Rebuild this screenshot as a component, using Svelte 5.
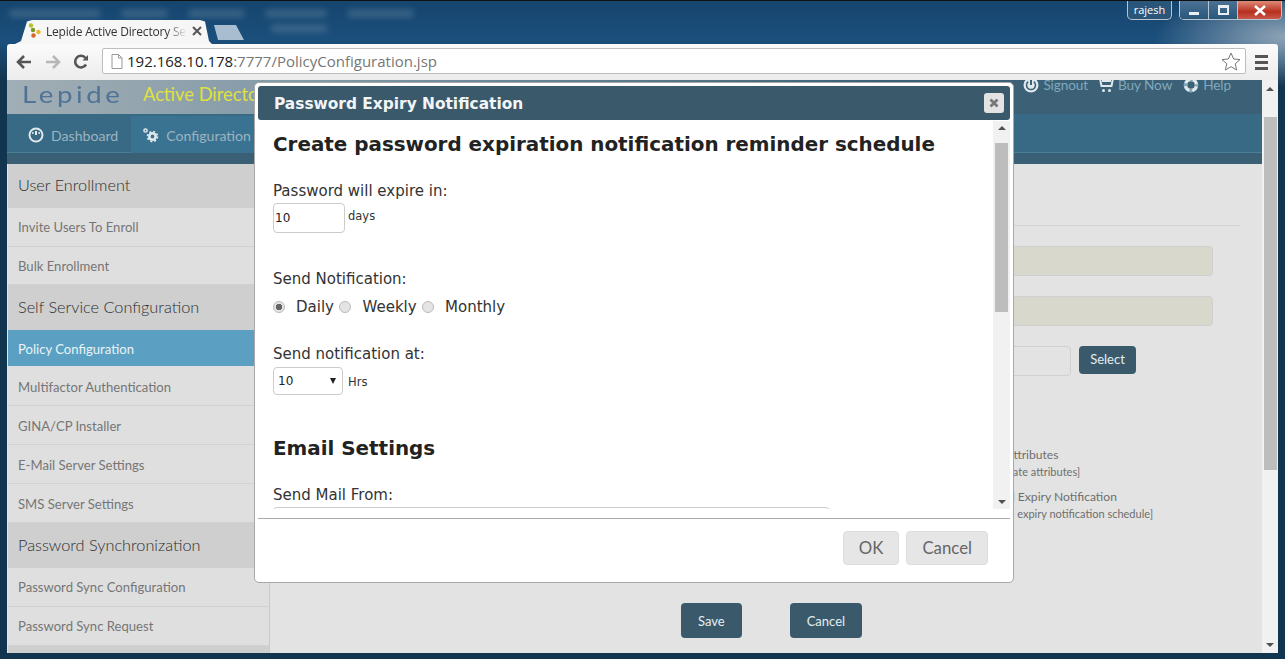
<script>
    const menu = [
        { title: "User Enrollment", items: ["Invite Users To Enroll", "Bulk Enrollment"] },
        { title: "Self Service Configuration", items: ["Policy Configuration", "Multifactor Authentication", "GINA/CP Installer", "E-Mail Server Settings", "SMS Server Settings"] },
        { title: "Password Synchronization", items: ["Password Sync Configuration", "Password Sync Request"] },
        { title: "Reports", items: [] }
    ];
    const blurred = [90, 45, 55, 60, 65];
</script>

<div class="window">
    <div class="titlebar">
        <div class="blur-row">
            {#each blurred as w}
                <span class="blur-bar" style="width: {w}px"></span>
            {/each}
        </div>
        <span class="blur-second"></span>
        <div class="tab">
            <svg class="favicon" width="14" height="16" viewBox="0 0 14 16">
                <circle cx="3" cy="2.5" r="2.2" fill="#b5c22c" />
                <circle cx="5" cy="7" r="2.2" fill="#7c9a2c" />
                <circle cx="10.5" cy="9" r="2.2" fill="#f0b429" />
                <circle cx="5.5" cy="12.5" r="2.2" fill="#d9642c" />
            </svg>
            <span class="tab-title">Lepide Active Directory Self</span>
            <svg class="tab-x" width="10" height="10" viewBox="0 0 10 10"><path d="M1 1l8 8M9 1l-8 8" stroke="#555" stroke-width="2" /></svg>
        </div>
        <div class="newtab"></div>
        <div class="user">rajesh</div>
        <div class="controls">
            <span class="ctl"><i class="min"></i></span>
            <span class="ctl"><i class="max"></i></span>
            <span class="ctl close">
                <svg width="14" height="11" viewBox="0 0 14 11"><path d="M2 1l10 9M12 1L2 10" stroke="#fff" stroke-width="2.6" /></svg>
            </span>
        </div>
    </div>

    <div class="toolbar">
        <svg class="tool" width="18" height="16" viewBox="0 0 18 16"><path d="M16 8H4M9 2L3 8l6 6" fill="none" stroke="#555" stroke-width="2.6" /></svg>
        <svg class="tool" width="18" height="16" viewBox="0 0 18 16"><path d="M2 8h12M9 2l6 6-6 6" fill="none" stroke="#b8b8b8" stroke-width="2.6" /></svg>
        <svg class="tool" width="16" height="16" viewBox="0 0 16 16"><path d="M13 10.5A5.8 5.8 0 1 1 12.5 4" fill="none" stroke="#555" stroke-width="2.6" /><path d="M9.5 6.5H15V1z" fill="#555" /></svg>
        <div class="omnibox">
            <svg width="12" height="15" viewBox="0 0 12 15"><path d="M1 .5h6.5L11 4v10.500H1zM7.500.5V4H11" fill="#fff" stroke="#999" /></svg>
            <span class="url"><b>192.168.10.178</b>:7777/PolicyConfiguration.jsp</span>
            <svg class="star" width="20" height="19" viewBox="0 0 20 19"><path d="M10 1l2.700 6 6.300.6-4.800 4.200 1.500 6.200L10 14.700 4.300 18l1.500-6.200L1 7.600 7.300 7z" fill="#fff" stroke="#777" /></svg>
        </div>
        <div class="hamburger"><i></i><i></i><i></i></div>
    </div>

    <div class="page">
        <div class="content">
            <header class="top">
                <div class="logo"><span>Lepide</span></div>
                <div class="product">Active Directory Self Service</div>
                <div class="toplinks">
                    <svg width="16" height="16" viewBox="0 0 16 16"><circle cx="8" cy="8" r="7.500" fill="#dfe8ec" /><path d="M8 3v5" stroke="#3c6075" stroke-width="2" /><path d="M5.200 4.600a4.500 4.500 0 1 0 5.600 0" fill="none" stroke="#3c6075" stroke-width="1.500" /></svg>
                    <span class="link">Signout</span>
                    <svg width="15" height="16" viewBox="0 0 15 16"><path d="M1 1.500h13l-1.500 7.500h-10zM3 4h9" fill="none" stroke="#dfe8ec" stroke-width="2" /><circle cx="4.500" cy="13.500" r="1.500" fill="#dfe8ec" /><circle cx="10.500" cy="13.500" r="1.500" fill="#dfe8ec" /></svg>
                    <span class="link">Buy Now</span>
                    <svg width="16" height="16" viewBox="0 0 16 16"><circle cx="8" cy="8" r="5.500" fill="none" stroke="#dfe8ec" stroke-width="3.500" /><circle cx="8" cy="8" r="5.500" fill="none" stroke="#7fa9bd" stroke-width="3.500" stroke-dasharray="3 5.600" stroke-dashoffset="1.500" /></svg>
                    <span class="link">Help</span>
                </div>
            </header>
            <nav class="nav">
                <div class="nav-row">
                    <div class="nav-item">
                        <svg width="16" height="16" viewBox="0 0 16 16"><circle cx="8" cy="8" r="6.500" fill="#3c6a82" stroke="#dfe8ec" stroke-width="2" /><path d="M8 4v4" stroke="#dfe8ec" stroke-width="2" /><circle cx="4.800" cy="6" r="1" fill="#dfe8ec" /><circle cx="11.200" cy="6" r="1" fill="#dfe8ec" /></svg>
                        Dashboard
                    </div>
                    <div class="nav-item active">
                        <svg width="17" height="16" viewBox="0 0 17 16"><circle cx="10.500" cy="9.500" r="3.200" fill="none" stroke="#dfe8ec" stroke-width="2.600" /><circle cx="10.500" cy="9.500" r="5" fill="none" stroke="#dfe8ec" stroke-width="1.600" stroke-dasharray="2 1.930" /><circle cx="3.500" cy="3.500" r="1.600" fill="none" stroke="#dfe8ec" stroke-width="1.500" /></svg>
                        Configuration
                    </div>
                </div>
                <div class="nav-foot"></div>
            </nav>
            <div class="body">
                <aside class="sidebar">
                    {#each menu as group}
                        <div class="group">{group.title}</div>
                        {#each group.items as item}
                            <div class="item" class:current={item === "Policy Configuration"}>{item}</div>
                        {/each}
                    {/each}
                </aside>
                <main class="main">
                    <div class="rule"></div>
                    <div class="field filled"></div>
                    <div class="field filled"></div>
                    <div class="pick">
                        <div class="field"></div>
                        <button class="btn small">Select</button>
                    </div>
                    <div class="opts">
                        <div class="opt">Update Attributes</div>
                        <div class="sub shifted">[Select update attributes]</div>
                        <div class="opt second">Password Expiry Notification</div>
                        <div class="sub">[Configure expiry notification schedule]</div>
                    </div>
                    <div class="actions">
                        <button class="btn">Save</button>
                        <button class="btn">Cancel</button>
                    </div>
                </main>
            </div>
        </div>
        <div class="scrollbar page-bar">
            <span class="up"></span>
            <span class="thumb"></span>
            <span class="down"></span>
        </div>

        <div class="modal">
            <div class="modal-head">
                <span>Password Expiry Notification</span>
                <span class="modal-x">
                    <svg width="10" height="10" viewBox="0 0 10 10"><path d="M1.500 1.500l7 7M8.500 1.500l-7 7" stroke="#777" stroke-width="2.800" /></svg>
                </span>
            </div>
            <div class="modal-scroll">
                <div class="modal-body">
                    <h1>Create password expiration notification reminder schedule</h1>
                    <label class="lbl first" for="expire">Password will expire in:</label>
                    <div class="line">
                        <input id="expire" class="num" value="10" />
                        <span class="unit days">days</span>
                    </div>
                    <div class="lbl notif">Send Notification:</div>
                    <div class="radios">
                        <span class="radio on"></span><span class="r-text">Daily</span>
                        <span class="radio"></span><span class="r-text">Weekly</span>
                        <span class="radio"></span><span class="r-text">Monthly</span>
                    </div>
                    <div class="lbl at">Send notification at:</div>
                    <div class="line">
                        <div class="sel">10<span class="caret"></span></div>
                        <span class="unit hrs">Hrs</span>
                    </div>
                    <h2>Email Settings</h2>
                    <div class="lbl">Send Mail From:</div>
                    <div class="mailbox"></div>
                </div>
                <div class="scrollbar modal-bar">
                    <span class="up"></span>
                    <span class="thumb"></span>
                    <span class="down"></span>
                </div>
            </div>
            <div class="modal-foot">
                <button class="mbtn">OK</button>
                <button class="mbtn">Cancel</button>
            </div>
        </div>
    </div>
</div>

<style>
    :global(body) {
        margin: 0;
        overflow: hidden;
    }
    .window {
        width: 1285px;
        height: 659px;
        box-sizing: border-box;
        padding: 0 7px 5px 7px;
        display: flex;
        flex-direction: column;
        background:
            radial-gradient(ellipse 130px 50px at 1285px 36px, #8ea3b5 0%, rgba(142, 163, 181, 0) 100%),
            linear-gradient(#16456e, #1b4f7c 40px, #12354f 80px);
        border-top: 1px solid #111;
        font-family: "Lato", sans-serif;
    }

    /* browser chrome */
    .titlebar {
        height: 43px;
        flex: none;
        display: flex;
        align-items: flex-end;
        position: relative;
    }
    .blur-row {
        position: absolute;
        left: 3px;
        top: 9px;
        display: flex;
        gap: 22px;
        filter: blur(3px);
        opacity: .55;
    }
    .blur-bar, .blur-second {
        height: 7px;
        background: #5d7f9b;
    }
    .blur-second {
        position: absolute;
        left: 264px;
        top: 24px;
        width: 56px;
        filter: blur(3px);
        opacity: .55;
    }
    .tab {
        width: 197px;
        height: 24px;
        margin-left: 8px;
        box-sizing: border-box;
        padding: 0 10px 2px 13px;
        display: flex;
        align-items: center;
        background: #f6f6f6;
        clip-path: polygon(0 100%, 6px 88%, 12px 6%, 17px 0, 185px 0, 190px 6%, 194px 88%, 100% 100%);
        font-family: "Open Sans", sans-serif;
        font-size: 12px;
        color: #333;
    }
    .favicon {
        flex: none;
        margin-right: 4px;
    }
    .tab-title {
        flex: 1;
        white-space: nowrap;
        overflow: hidden;
        letter-spacing: -.2px;
        mask-image: linear-gradient(90deg, #000 85%, transparent);
    }
    .tab-x {
        flex: none;
        margin-left: 5px;
    }
    .newtab {
        width: 30px;
        height: 15px;
        margin: 0 0 4px 2px;
        background: #a8bdd0;
        clip-path: polygon(4px 100%, 0 0, 22px 0, 100% 100%);
    }
    .user {
        position: absolute;
        left: 1120px;
        top: 0;
        width: 45px;
        height: 19px;
        box-sizing: border-box;
        border: 1px solid #b7c6d2;
        border-top: 0;
        border-radius: 0 0 5px 5px;
        background: #2a567a;
        text-align: center;
        color: #fff;
        font-family: "Open Sans", sans-serif;
        font-size: 11px;
        line-height: 17px;
    }
    .controls {
        position: absolute;
        left: 1172px;
        top: 0;
        width: 103px;
        height: 19px;
        display: flex;
        border: 1px solid #b7c6d2;
        border-top: 0;
        border-radius: 0 0 5px 5px;
        box-sizing: border-box;
        overflow: hidden;
    }
    .ctl {
        width: 28px;
        border-right: 1px solid #b7c6d2;
        background: linear-gradient(#4b7295, #2a5779);
        display: flex;
        align-items: center;
        justify-content: center;
    }
    .ctl.close {
        flex: 1;
        border: 0;
        background: linear-gradient(#e08a78, #b8301f 60%, #c9584a);
    }
    .min {
        width: 10px;
        height: 3px;
        margin-top: 6px;
        background: #e8eef2;
    }
    .max {
        width: 7px;
        height: 5px;
        border: 2px solid #e8eef2;
        border-top-width: 3px;
    }
    .toolbar {
        height: 36px;
        flex: none;
        display: flex;
        align-items: center;
        padding-left: 8px;
        box-sizing: border-box;
        background: linear-gradient(#fbfbfb, #ececec);
        border-radius: 3px 3px 0 0;
    }
    .tool {
        flex: none;
        margin-right: 11px;
    }
    .omnibox {
        width: 1144px;
        height: 26px;
        margin: -2px 0 0 2px;
        box-sizing: border-box;
        padding: 0 3px 0 8px;
        display: flex;
        align-items: center;
        gap: 6px;
        background: #fff;
        border: 1px solid #bdbdbd;
        border-radius: 2px;
    }
    .url {
        flex: 1;
        margin-left: -2px;
        font-family: "Open Sans", sans-serif;
        font-size: 15px;
        color: #777;
    }
    .url b {
        font-weight: 400;
        color: #222;
    }
    .star {
        margin-right: 1px;
    }
    .hamburger {
        margin-left: 9px;
        width: 13px;
        display: flex;
        flex-direction: column;
        gap: 3px;
    }
    .hamburger i {
        height: 3px;
        background: #555;
    }

    /* page behind the dialog */
    .page {
        flex: 1;
        min-height: 0;
        display: flex;
        position: relative;
        border-bottom: 1px solid #12354f;
    }
    .content {
        flex: 1;
        min-width: 0;
        display: flex;
        flex-direction: column;
        background: #e3e3e3;
        overflow: hidden;
    }
    .top {
        height: 34px;
        flex: none;
        display: flex;
        align-items: flex-start;
        box-sizing: border-box;
        padding: 0 31px 0 15px;
        background: linear-gradient(90deg, #a2aeb5 0, #7f98a6 25%, #3c6075 70%);
    }
    .logo {
        margin-top: -1px;
        width: 121px;
        font-size: 23px;
        line-height: 30px;
        letter-spacing: 3px;
        color: #4f7396;
    }
    .logo span {
        display: inline-block;
        transform: scaleX(1.2);
        transform-origin: left;
    }
    .product {
        margin-top: 1px;
        font-size: 18.300px;
        line-height: 26px;
        color: #e0e040;
        white-space: nowrap;
    }
    .toplinks {
        margin-left: auto;
        display: flex;
        align-items: center;
        height: 10px;
        gap: 4px;
    }
    .toplinks svg {
        margin-left: 7px;
    }
    .toplinks svg:first-child {
        margin-left: 0;
    }
    .link {
        font-size: 13.600px;
        letter-spacing: -.1px;
        color: #7fa9bd;
    }
    .nav {
        height: 50px;
        flex: none;
        display: flex;
        flex-direction: column;
        background: #37667f;
    }
    .nav-row {
        height: 39px;
        flex: none;
        display: flex;
        padding-left: 7px;
        background: #386a86;
        border-bottom: 1px solid #4a8199;
        box-sizing: border-box;
    }
    .nav-item {
        display: flex;
        align-items: center;
        gap: 7px;
        height: 36px;
        margin-top: 2px;
        padding: 1px 13px 0 14px;
        font-size: 14.100px;
        color: #9db3c0;
    }
    .nav-item.active {
        width: 200px;
        padding-left: 11px;
        background: #3a7391;
    }
    .nav-foot {
        flex: 1;
        background: #3a6075;
    }
    .body {
        flex: 1;
        min-height: 0;
        display: flex;
    }
    .sidebar {
        width: 261px;
        flex: none;
        margin-left: 1px;
        border-right: 1px solid #c9c9c9;
        background: #dfdfdf;
        overflow: hidden;
    }
    .group {
        height: 45px;
        box-sizing: border-box;
        padding: 0 10px 2px;
        display: flex;
        align-items: center;
        background: #cfcfcf;
        font-size: 16.300px;
        font-weight: 300;
        color: #2e2e2e;
    }
    .group:first-child {
        height: 44px;
        padding-bottom: 4px;
    }
    .item {
        height: 38px;
        padding: 0 10px;
        display: flex;
        align-items: center;
        border-bottom: 1px solid #d2d2d2;
        font-size: 13.100px;
        color: #767676;
    }
    /* the enrollment group ends a pixel early */
    .item:nth-child(3) {
        height: 37px;
    }
    .item.current {
        height: 34px;
        padding-top: 2px;
        border: 0;
        background: #5ba0c2;
        color: #e9f3f7;
    }
    .item.current ~ .item {
        height: 36px;
        padding-top: 2px;
    }
    .item.current + .item {
        height: 37px;
    }
    .group ~ .group ~ .group ~ .item {
        height: 38px;
        padding-top: 0;
    }
    .main {
        flex: 1;
        min-width: 0;
        display: flex;
        flex-direction: column;
        padding: 0 22px 0 0;
        font-size: 14px;
        color: #6e6e6e;
    }
    .rule {
        height: 1px;
        margin: 61px 0 20px;
        background: #d2d2d2;
    }
    .field {
        height: 30px;
        margin-bottom: 20px;
        margin-left: 200px;
        margin-right: 27px;
        box-sizing: border-box;
        border: 1px solid #d0d0d0;
        border-radius: 4px;
    }
    .field.filled {
        background: #d9d8cc;
    }
    .pick {
        display: flex;
        gap: 8px;
    }
    .pick .field {
        flex: 1;
        margin-right: 0;
    }
    .btn {
        height: 35px;
        padding: 0 17px;
        border: 0;
        border-radius: 4px;
        background: #3a5a6c;
        color: #e6edf0;
        font-family: "Lato", sans-serif;
        font-size: 13px;
    }
    .btn.small {
        width: 57px;
        height: 28px;
        padding: 0 0 2px;
        margin-right: 104px;
    }
    .opts {
        margin: 50px 0 0 694px;
        white-space: nowrap;
    }
    .opt {
        height: 18px;
        font-size: 12.100px;
        line-height: 18px;
    }
    .sub {
        height: 18px;
        margin-top: -1px;
        font-size: 11px;
        line-height: 18px;
    }
    .sub.shifted {
        margin-left: -5px;
    }
    .opt.second {
        margin-top: 7px;
    }
    .actions {
        display: flex;
        gap: 48px;
        margin: 80px 0 0 411px;
    }
    .scrollbar {
        position: relative;
        flex: none;
        background: #f1f1f1;
    }
    .scrollbar .thumb {
        position: absolute;
        background: #bdbdbd;
    }
    .up, .down {
        position: absolute;
        left: 50%;
        margin-left: -4px;
        border: 4px solid transparent;
    }
    .up {
        border-bottom-color: #505050;
        border-top-width: 0;
    }
    .down {
        border-top-color: #505050;
        border-bottom-width: 0;
    }
    .page-bar {
        width: 16px;
    }
    .page-bar .up {
        top: 7px;
    }
    .page-bar .down {
        bottom: 6px;
    }
    .page-bar .thumb {
        left: 2px;
        right: 1px;
        top: 37px;
        height: 353px;
    }

    /* dialog */
    .modal {
        position: absolute;
        left: 247px;
        top: 2px;
        width: 760px;
        height: 501px;
        box-sizing: border-box;
        padding: 3px;
        display: flex;
        flex-direction: column;
        background: #fff;
        border: 1px solid #a8a8a8;
        border-radius: 5px;
        font-family: "DejaVu Sans", sans-serif;
        color: #333;
    }
    .modal-head {
        height: 34px;
        flex: none;
        padding: 0 6px 0 16px;
        display: flex;
        align-items: center;
        justify-content: space-between;
        background: #3a5a6c;
        border-radius: 3px;
        color: #f2f5f6;
        font-weight: 700;
        font-size: 15.400px;
    }
    .modal-head span:first-child {
        margin-top: 2px;
    }
    .modal-x {
        width: 20px;
        height: 20px;
        display: flex;
        align-items: center;
        justify-content: center;
        background: #e3e3e3;
        border-radius: 3px;
    }
    .modal-scroll {
        height: 388px;
        flex: none;
        margin-top: 1px;
        display: flex;
        overflow: hidden;
    }
    .modal-body {
        flex: 1;
        min-width: 0;
        padding-left: 15px;
    }
    h1, h2 {
        margin: 0;
        color: #222;
        font-weight: 700;
        font-size: 19.900px;
    }
    h1 {
        height: 25px;
        margin-top: 11px;
        line-height: 25px;
        white-space: nowrap;
    }
    h2 {
        height: 25px;
        line-height: 25px;
        margin: 41px 0 25px;
    }
    .lbl {
        display: block;
        height: 18px;
        font-size: 15px;
        line-height: 18px;
    }
    .lbl.first {
        margin-top: 25px;
        margin-bottom: 3px;
    }
    .lbl.notif {
        margin-top: 37px;
        margin-bottom: 9px;
    }
    .lbl.at {
        margin-top: 28px;
        margin-bottom: 4px;
    }
    .line {
        display: flex;
        align-items: center;
        gap: 3px;
    }
    .num {
        width: 72px;
        height: 30px;
        box-sizing: border-box;
        padding: 0 0 0 1px;
        border: 1px solid #ccc;
        border-radius: 4px;
        font-family: "DejaVu Sans", sans-serif;
        font-size: 12px;
        color: #222;
    }
    .unit {
        font-size: 11.500px;
    }
    .days {
        margin-bottom: 4px;
    }
    .hrs {
        margin: 1px 0 0 2px;
    }
    .radios {
        display: flex;
        align-items: center;
        height: 20px;
        font-size: 15px;
    }
    .radio {
        width: 12px;
        height: 12px;
        box-sizing: border-box;
        border: 1px solid #bbb;
        border-radius: 50%;
        background: #e4e4e4;
    }
    .radio.on {
        background: radial-gradient(circle, #666 0 3px, #e4e4e4 3.5px);
    }
    .r-text {
        margin: 0 5.500px 0 11px;
    }
    .sel {
        width: 70px;
        height: 28px;
        box-sizing: border-box;
        padding: 0 0 0 4px;
        display: flex;
        align-items: center;
        justify-content: space-between;
        border: 1px solid #ccc;
        border-radius: 4px;
        font-size: 12px;
        color: #222;
    }
    .caret {
        margin-right: 6px;
        border: 3.500px solid transparent;
        border-top: 6px solid #222;
        border-bottom: 0;
    }
    .mailbox {
        width: 557px;
        height: 20px;
        margin-top: 3px;
        box-sizing: border-box;
        border: 1px solid #ccc;
        border-radius: 4px;
    }
    .modal-bar {
        width: 17px;
    }
    .modal-bar .up {
        top: 5px;
    }
    .modal-bar .down {
        bottom: 5px;
    }
    .modal-bar .thumb {
        left: 2px;
        right: 2px;
        top: 22px;
        height: 169px;
    }
    .modal-foot {
        flex: 1;
        margin-top: 9px;
        padding: 12px 22px 0 0;
        display: flex;
        justify-content: flex-end;
        gap: 7px;
        border-top: 1px solid #aaa;
    }
    .mbtn {
        height: 34px;
        padding: 0 15px 2px;
        border: 1px solid #ddd;
        border-radius: 4px;
        background: #e6e6e6;
        color: #666;
        font-family: "Lato", sans-serif;
        font-size: 16.800px;
    }
</style>
